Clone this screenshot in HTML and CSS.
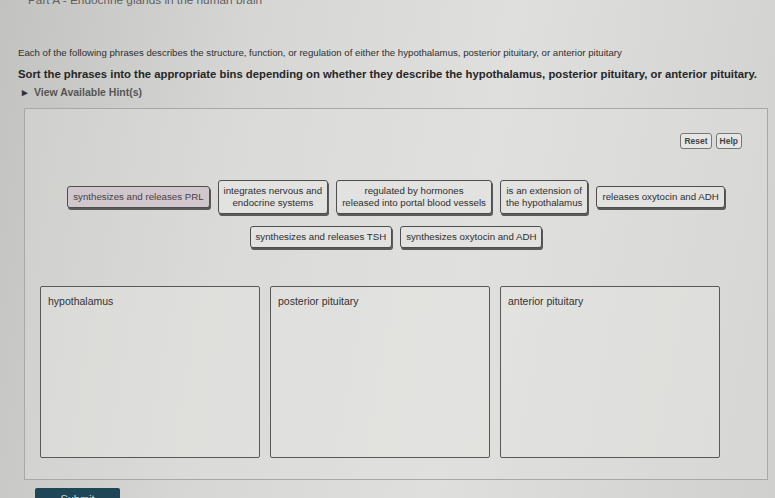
FILE: index.html
```html
<!DOCTYPE html>
<html lang="en">
<head>
  <meta charset="UTF-8" />
  <meta name="viewport" content="width=device-width, initial-scale=1.0"/>
  <title>Part A - Endocrine glands in the human brain</title>
  <link rel="stylesheet" href="styles.css">
</head>
<body>

  <div class="part-title">Part A - Endocrine glands in the human brain</div>

  <div class="instructions">
    <p class="lead">Each of the following phrases describes the structure, function, or regulation of either the hypothalamus, posterior pituitary, or anterior pituitary</p>
    <p class="task">Sort the phrases into the appropriate bins depending on whether they describe the hypothalamus, posterior pituitary, or anterior pituitary.</p>
    <div class="hint-toggle"><span class="caret">&#9656;</span> View Available Hint(s)</div>
  </div>

  <div class="sort-panel">
    <div class="toolbar">
      <button class="tool-btn">Reset</button>
      <button class="tool-btn">Help</button>
    </div>

    <!-- unsorted phrases -->
    <div class="chip-pool">
      <div class="chip chip-held">synthesizes and releases PRL</div>
      <div class="chip">integrates nervous and<br>endocrine systems</div>
      <div class="chip">regulated by hormones<br>released into portal blood vessels</div>
      <div class="chip">is an extension of<br>the hypothalamus</div>
      <div class="chip">releases oxytocin and ADH</div>
      <div class="chip">synthesizes and releases TSH</div>
      <div class="chip">synthesizes oxytocin and ADH</div>
    </div>

    <div class="bins">
      <div class="bin"><span class="bin-label">hypothalamus</span></div>
      <div class="bin"><span class="bin-label">posterior pituitary</span></div>
      <div class="bin"><span class="bin-label">anterior pituitary</span></div>
    </div>
  </div>

  <button class="submit-btn">Submit</button>

</body>
</html>
```

FILE: styles.css
```css
body {
  margin: 0;
  font-family: "Liberation Sans", Arial, sans-serif;
  color: #2b2b2b;
  background: linear-gradient(100deg, #c2c3c0 0%, #d6d7d5 30%, #dfdfde 60%, #d0d1cf 100%);
  height: 498px;
  overflow: hidden;
}

.part-title {
  margin-top: -6px;
  padding-left: 28px;
  font-size: 11.8px;
  line-height: 12px;
  color: #5e5e5e;
}

.instructions {
  padding: 0 18px;
}

.instructions p {
  margin: 0;
  white-space: nowrap;
}

.lead {
  margin-top: 41px !important;
  font-size: 9.65px;
  line-height: 12px;
  color: #2f2f2f;
}

.task {
  margin-top: 9px !important;
  font-size: 11.3px;
  line-height: 12px;
  font-weight: bold;
  color: #262626;
}

.hint-toggle {
  margin-top: 6px;
  padding-left: 4px;
  font-size: 10.5px;
  line-height: 12px;
  font-weight: bold;
  color: #555;
}

.caret {
  margin-right: 3px;
  color: #333;
}

.sort-panel {
  box-sizing: border-box;
  margin: 10px 0 0 24px;
  width: 744px;
  height: 372px;
  border: 1px solid #a8a8a6;
  background: rgba(226, 226, 224, 0.35);
}

.toolbar {
  display: flex;
  justify-content: flex-end;
  gap: 4px;
  padding: 24px 25px 0 0;
}

.tool-btn {
  font-family: inherit;
  font-size: 8.5px;
  font-weight: bold;
  color: #444;
  background: #e6e6e4;
  border: 1.5px solid #777;
  border-radius: 3px;
  padding: 2px 3px;
  line-height: 10px;
}

.chip-pool {
  display: flex;
  flex-wrap: wrap;
  justify-content: center;
  align-items: center;
  gap: 12px 8px;
  margin: 31px auto 0;
  width: 690px;
}

.chip {
  font-size: 9.7px;
  line-height: 12px;
  color: #2e2e2e;
  text-align: center;
  background: #e2e2e0;
  border: 1.5px solid #4e4e4e;
  border-radius: 3px;
  box-shadow: 1px 2px 0 #5a5a5a;
  padding: 4px 5px;
}

.chip-held {
  background: #cfc7cb;
  color: #4a4047;
}

.bins {
  display: flex;
  gap: 10px;
  padding: 38px 0 0 15px;
}

.bin {
  box-sizing: border-box;
  width: 220px;
  height: 172px;
  border: 1.5px solid #595959;
  border-radius: 2px;
  background: rgba(230, 230, 228, 0.4);
  padding: 4px 7px;
}

.bin-label {
  font-size: 10.5px;
  color: #333;
}

.submit-btn {
  display: block;
  margin: 8px 0 0 35px;
  width: 85px;
  height: 22px;
  border: none;
  border-radius: 2px;
  background: #1e4656;
  color: #cfd8dc;
  font-family: inherit;
  font-size: 11px;
}
```
